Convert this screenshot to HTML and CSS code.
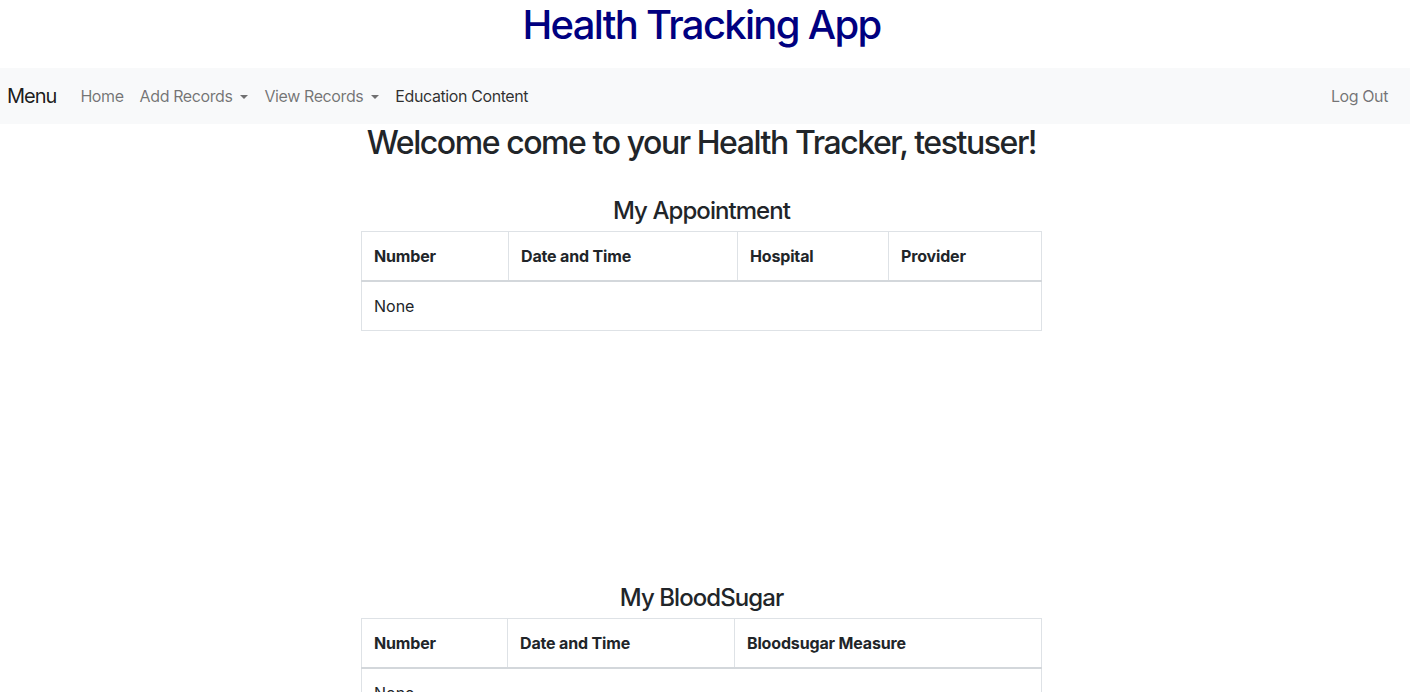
FILE: index.html
```html
<!DOCTYPE html>
<html lang="en">
<head>
<meta charset="utf-8">
<title>Health Tracking App</title>
<link rel="stylesheet" href="styles.css">
</head>
<body>
<h1 class="app-title">Health Tracking App</h1>
<nav class="navbar">
  <a class="brand" href="#">Menu</a>
  <ul class="nav-list">
    <li><a class="nav-link" href="#">Home</a></li>
    <li><a class="nav-link dropdown" href="#">Add Records</a></li>
    <li><a class="nav-link dropdown" href="#">View Records</a></li>
    <li><a class="nav-link active" href="#">Education Content</a></li>
  </ul>
  <a class="nav-link logout" href="#">Log Out</a>
</nav>
<main class="main">
  <h2 class="welcome">Welcome come to your Health Tracker, testuser!</h2>
  <section class="section appointments">
    <h4 class="section-title">My Appointment</h4>
    <table class="table">
      <colgroup>
        <col class="c-num"><col class="c-date"><col class="c-hosp"><col>
      </colgroup>
      <thead>
        <tr><th>Number</th><th>Date and Time</th><th>Hospital</th><th>Provider</th></tr>
      </thead>
      <tbody>
        <tr><td colspan="4">None</td></tr>
      </tbody>
    </table>
  </section>
  <section class="section bloodsugar">
    <h4 class="section-title">My BloodSugar</h4>
    <table class="table">
      <colgroup>
        <col class="c-num2"><col class="c-date2"><col>
      </colgroup>
      <thead>
        <tr><th>Number</th><th>Date and Time</th><th>Bloodsugar Measure</th></tr>
      </thead>
      <tbody>
        <tr><td colspan="3">None</td></tr>
      </tbody>
    </table>
  </section>
</main>
</body>
</html>
```

FILE: styles.css
```css
* { box-sizing: border-box; }
html, body { margin: 0; padding: 0; }
body {
  font-family: Inter, "Noto Sans", "Liberation Sans", sans-serif;
  font-size: 16px;
  line-height: 1.5;
  color: #212529;
  background: #fff;
}
.app-title {
  margin: 0 7px 20px 0;
  text-align: center;
  font-size: 40px;
  line-height: 50px;
  font-weight: 500;
  letter-spacing: -0.042em;
  color: #000080;
  height: 48px;
}
.navbar {
  display: flex;
  align-items: center;
  height: 56px;
  padding: 0 14px 0 7px;
  background: #f8f9fa;
}
.brand {
  font-size: 20px;
  line-height: 30px;
  letter-spacing: -0.05em;
  color: rgba(0,0,0,.9);
  text-decoration: none;
  margin-right: 16px;
}
.nav-list {
  display: flex;
  list-style: none;
  margin: 0;
  padding: 0;
  flex: 1;
}
.nav-link {
  display: block;
  padding: 8px;
  color: rgba(0,0,0,.55);
  text-decoration: none;
  line-height: 24px;
  letter-spacing: -0.025em;
}
.nav-link.active { color: rgba(0,0,0,.82); }
.nav-link.dropdown::after {
  content: "";
  display: inline-block;
  margin-left: 8px;
  vertical-align: 3px;
  border-top: 4px solid;
  border-left: 4px solid transparent;
  border-right: 4px solid transparent;
}
.main {
  width: 681px;
  margin: 0 auto;
  position: relative;
  left: -3.5px;
  text-align: center;
}
.welcome {
  margin: 0 0 34px;
  font-size: 32px;
  line-height: 38px;
  font-weight: 500;
  letter-spacing: -0.045em;
  white-space: nowrap;
}
.section-title {
  margin: 0 0 6px;
  font-size: 24px;
  line-height: 29px;
  font-weight: 500;
  letter-spacing: -0.039em;
}
.appointments { margin-bottom: 252px; }
.table {
  width: 100%;
  border-collapse: collapse;
  text-align: left;
  border: 1px solid #dee2e6;
}
.table th, .table td {
  padding: 12px;
  border: 1px solid #dee2e6;
  line-height: 24px;
}
.table th { font-weight: 700; letter-spacing: -0.01em; }
.table thead th { border-bottom: 2px solid #d3d7db; }
.c-num { width: 147px; }
.c-date { width: 229px; }
.c-hosp { width: 151px; }
.c-num2 { width: 146px; }
.c-date2 { width: 227px; }
```
